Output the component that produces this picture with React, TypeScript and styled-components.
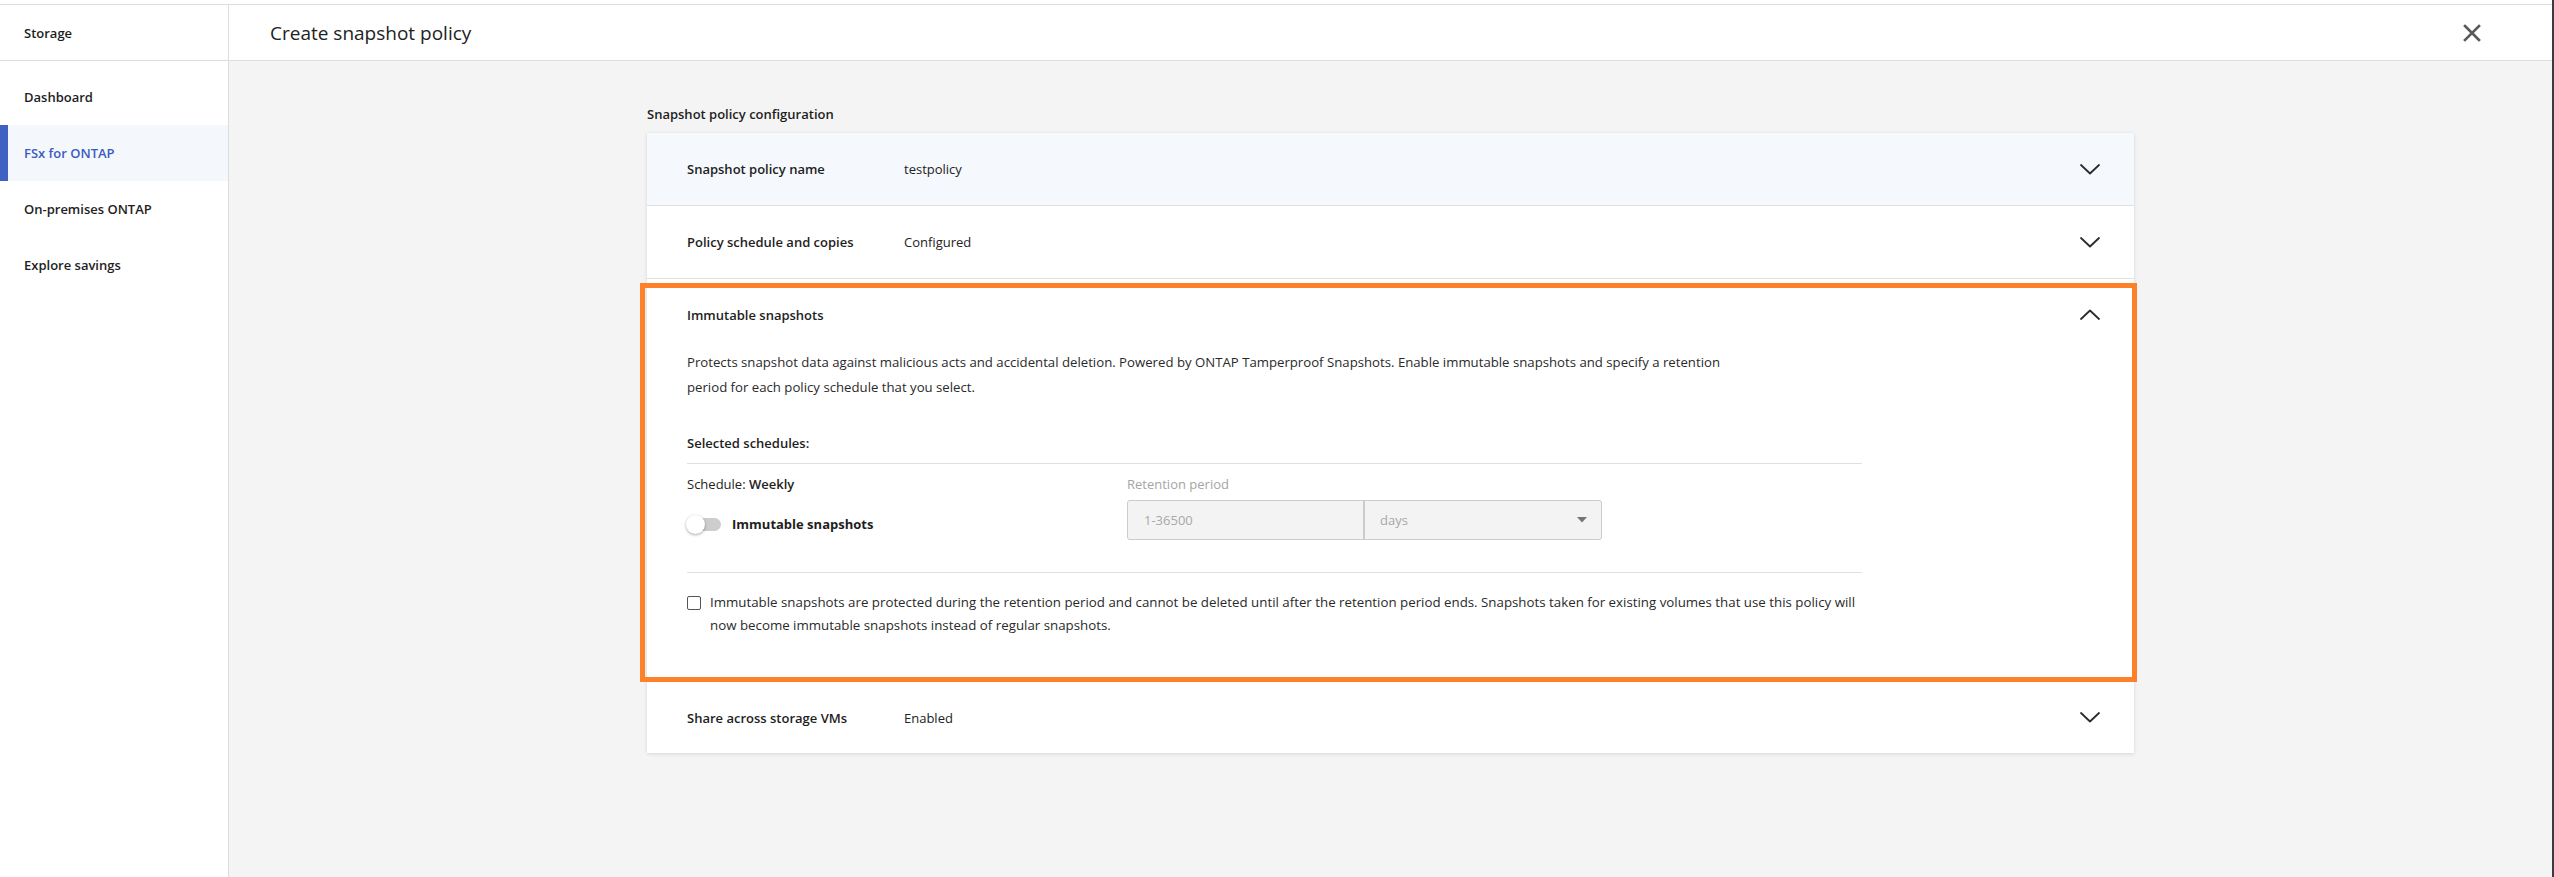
import React from "react";
import styled, { createGlobalStyle } from "styled-components";

const GlobalStyle = createGlobalStyle`
  html, body { margin: 0; padding: 0; }
  body {
    font-family: "Segoe UI", "Open Sans", "Noto Sans", sans-serif;
    color: #212121;
    background: #ffffff;
  }
  * { box-sizing: border-box; }
`;

const Page = styled.div`
  height: 877px;
  display: flex;
  flex-direction: column;
  padding-top: 4px;
  border-right: 2px solid #3c3c3c;
  background: #ffffff;
  overflow: hidden;
`;

const Frame = styled.div`
  flex: 1;
  display: flex;
  min-height: 0;
  border-top: 1px solid #dddddd;
`;

const Sidebar = styled.aside`
  width: 229px;
  flex-shrink: 0;
  border-right: 1px solid #dddddd;
  display: flex;
  flex-direction: column;
`;

const SideHeader = styled.div`
  height: 56px;
  border-bottom: 1px solid #dddddd;
  display: flex;
  align-items: center;
  padding-left: 24px;
  font-size: 13px;
  font-weight: 600;
  color: #1e1e1e;
`;

const Nav = styled.nav`
  display: flex;
  flex-direction: column;
  padding-top: 8px;
`;

const NavItem = styled.div<{ $active?: boolean }>`
  height: 56px;
  display: flex;
  align-items: center;
  padding-left: 24px;
  font-size: 13px;
  font-weight: 600;
  color: ${(p) => (p.$active ? "#3b5bc2" : "#1e1e1e")};
  background: ${(p) => (p.$active ? "#f4f8fd" : "transparent")};
  box-shadow: ${(p) => (p.$active ? "inset 8px 0 0 #3d62c1" : "none")};
`;

const Main = styled.main`
  flex: 1;
  display: flex;
  flex-direction: column;
  min-width: 0;
`;

const MainHeader = styled.header`
  height: 56px;
  flex-shrink: 0;
  border-bottom: 1px solid #dddddd;
  display: flex;
  align-items: center;
  justify-content: space-between;
  padding: 0 71px 0 41px;
`;

const PageTitle = styled.h1`
  margin: 0;
  font-size: 19px;
  font-weight: 400;
  color: #222222;
`;

const CloseButton = styled.button`
  width: 18px;
  height: 18px;
  padding: 0;
  border: 0;
  background: none;
  display: flex;
  align-items: center;
  justify-content: center;
  cursor: pointer;
`;

const Body = styled.div`
  flex: 1;
  background: #f4f4f4;
  padding-top: 44px;
`;

const Content = styled.div`
  width: 1487px;
  margin: 0 auto;
`;

const ConfigTitle = styled.div`
  font-size: 13px;
  font-weight: 600;
  line-height: 18px;
  margin-bottom: 10px;
  color: #1e1e1e;
`;

const Card = styled.div`
  background: #ffffff;
  box-shadow: 0 1px 4px rgba(0, 0, 0, 0.12);
`;

const Row = styled.div<{ $tint?: boolean; $last?: boolean }>`
  height: ${(p) => (p.$last ? "71px" : "73px")};
  display: grid;
  grid-template-columns: 217px 1fr auto;
  align-items: center;
  padding: 0 34px 0 40px;
  background: ${(p) => (p.$tint ? "#f5f9fd" : "#ffffff")};
  border-bottom: ${(p) => (p.$last ? "0" : "1px solid #e0e0e0")};
`;

const RowLabel = styled.div`
  font-size: 13px;
  font-weight: 600;
  color: #1e1e1e;
`;

const RowValue = styled.div`
  font-size: 13px;
  color: #222222;
`;

const Expanded = styled.section`
  position: relative;
  padding: 0 34px 45px 40px;
  &::after {
    content: "";
    position: absolute;
    top: 4px;
    left: -7px;
    right: -3px;
    bottom: 0;
    border: 5px solid #fd8128;
    pointer-events: none;
  }
`;

const ExpHeader = styled.div`
  height: 71px;
  display: flex;
  align-items: center;
  justify-content: space-between;
`;

const ExpTitle = styled.div`
  font-size: 13px;
  font-weight: 600;
  color: #1e1e1e;
`;

const Description = styled.p`
  margin: 0;
  max-width: 1070px;
  font-size: 13.2px;
  line-height: 25px;
  color: #2a2a2a;
`;

const SubTitle = styled.div`
  margin-top: 33px;
  font-size: 13px;
  font-weight: 600;
  line-height: 20px;
  color: #1e1e1e;
`;

const Divider = styled.div<{ $gap: number }>`
  width: 1175px;
  height: 1px;
  background: #e0e0e0;
  margin-top: ${(p) => p.$gap}px;
`;

const ScheduleGrid = styled.div`
  display: grid;
  grid-template-columns: 440px 475px;
  padding-top: 10px;
`;

const Column = styled.div`
  display: flex;
  flex-direction: column;
`;

const ScheduleLine = styled.div`
  font-size: 13px;
  line-height: 20px;
  color: #222222;
  b { font-weight: 600; }
`;

const ToggleRow = styled.div`
  margin-top: 18px;
  height: 24px;
  display: flex;
  align-items: center;
  gap: 11px;
`;

const ToggleTrack = styled.span`
  position: relative;
  width: 34px;
  height: 13px;
  border-radius: 7px;
  background: #cdcdcd;
  &::before {
    content: "";
    position: absolute;
    left: -1px;
    top: -3px;
    width: 19px;
    height: 19px;
    border-radius: 50%;
    background: #ffffff;
    box-shadow: 0 1px 3px rgba(0, 0, 0, 0.35);
  }
`;

const ToggleLabel = styled.span`
  font-size: 13px;
  font-weight: 700;
  color: #1e1e1e;
`;

const FieldLabel = styled.div`
  font-size: 13px;
  line-height: 20px;
  color: #a5a5a5;
  margin-bottom: 6px;
`;

const InputGroup = styled.div`
  display: flex;
  height: 40px;
  width: 475px;
  border: 1px solid #cccccc;
  border-radius: 3px;
  background: #f3f3f3;
`;

const InputCell = styled.div`
  width: 237px;
  display: flex;
  align-items: center;
  padding-left: 16px;
  font-size: 13px;
  color: #a8a8a8;
  border-right: 2px solid #cccccc;
`;

const SelectCell = styled.div`
  flex: 1;
  display: flex;
  align-items: center;
  justify-content: space-between;
  padding: 0 14px 0 15px;
  font-size: 13px;
  color: #a8a8a8;
`;

const CheckRow = styled.label`
  margin-top: 18px;
  display: flex;
  align-items: flex-start;
  gap: 9px;
`;

const CheckBox = styled.span`
  flex-shrink: 0;
  width: 14px;
  height: 14px;
  margin-top: 5px;
  border: 1.5px solid #555555;
  border-radius: 2px;
  background: #ffffff;
`;

const CheckText = styled.span`
  max-width: 1151px;
  font-size: 13.3px;
  line-height: 23px;
  color: #2a2a2a;
`;

const Chevron = ({ up }: { up?: boolean }) => (
  <svg width="20" height="11" viewBox="0 0 20 11" fill="none">
    <polyline
      points={up ? "1,10 10,1.5 19,10" : "1,1 10,9.5 19,1"}
      stroke="#2b2b2b"
      strokeWidth="1.8"
      strokeLinecap="round"
      strokeLinejoin="round"
    />
  </svg>
);

const Caret = () => (
  <svg width="10" height="6" viewBox="0 0 10 6">
    <polygon points="0,0 10,0 5,5.5" fill="#757575" />
  </svg>
);

const CloseIcon = () => (
  <svg width="18" height="18" viewBox="0 0 18 18">
    <path d="M2 2 L16 16 M16 2 L2 16" stroke="#595959" strokeWidth="2.6" strokeLinecap="square" />
  </svg>
);

export default function App() {
  return (
    <>
      <GlobalStyle />
      <Page>
        <Frame>
          <Sidebar>
            <SideHeader>Storage</SideHeader>
            <Nav>
              <NavItem>Dashboard</NavItem>
              <NavItem $active>FSx for ONTAP</NavItem>
              <NavItem>On-premises ONTAP</NavItem>
              <NavItem>Explore savings</NavItem>
            </Nav>
          </Sidebar>
          <Main>
            <MainHeader>
              <PageTitle>Create snapshot policy</PageTitle>
              <CloseButton aria-label="Close">
                <CloseIcon />
              </CloseButton>
            </MainHeader>
            <Body>
              <Content>
                <ConfigTitle>Snapshot policy configuration</ConfigTitle>
                <Card>
                  <Row $tint>
                    <RowLabel>Snapshot policy name</RowLabel>
                    <RowValue>testpolicy</RowValue>
                    <Chevron />
                  </Row>
                  <Row>
                    <RowLabel>Policy schedule and copies</RowLabel>
                    <RowValue>Configured</RowValue>
                    <Chevron />
                  </Row>
                  <Expanded>
                    <ExpHeader>
                      <ExpTitle>Immutable snapshots</ExpTitle>
                      <Chevron up />
                    </ExpHeader>
                    <Description>
                      Protects snapshot data against malicious acts and accidental deletion. Powered by ONTAP
                      Tamperproof Snapshots. Enable immutable snapshots and specify a retention period for each
                      policy schedule that you select.
                    </Description>
                    <SubTitle>Selected schedules:</SubTitle>
                    <Divider $gap={10} />
                    <ScheduleGrid>
                      <Column>
                        <ScheduleLine>
                          Schedule: <b>Weekly</b>
                        </ScheduleLine>
                        <ToggleRow>
                          <ToggleTrack />
                          <ToggleLabel>Immutable snapshots</ToggleLabel>
                        </ToggleRow>
                      </Column>
                      <Column>
                        <FieldLabel>Retention period</FieldLabel>
                        <InputGroup>
                          <InputCell>1-36500</InputCell>
                          <SelectCell>
                            days
                            <Caret />
                          </SelectCell>
                        </InputGroup>
                      </Column>
                    </ScheduleGrid>
                    <Divider $gap={32} />
                    <CheckRow>
                      <CheckBox />
                      <CheckText>
                        Immutable snapshots are protected during the retention period and cannot be deleted until
                        after the retention period ends. Snapshots taken for existing volumes that use this policy
                        will now become immutable snapshots instead of regular snapshots.
                      </CheckText>
                    </CheckRow>
                  </Expanded>
                  <Row $last>
                    <RowLabel>Share across storage VMs</RowLabel>
                    <RowValue>Enabled</RowValue>
                    <Chevron />
                  </Row>
                </Card>
              </Content>
            </Body>
          </Main>
        </Frame>
      </Page>
    </>
  );
}
